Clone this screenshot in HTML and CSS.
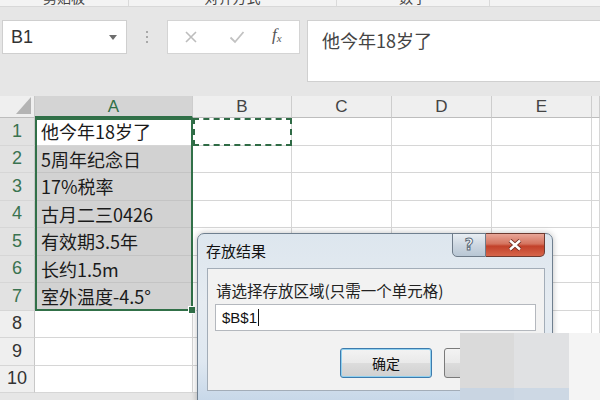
FILE: index.html
```html
<!DOCTYPE html>
<html lang="zh-CN">
<head>
    <meta charset="UTF-8">
    <title>存放结果</title>
    <link rel="stylesheet" href="styles.css">
</head>
<body>
    <div class="ribbon-tail">
        <div class="group g1"><span>剪贴板</span></div>
        <div class="group g2"><span>对齐方式</span></div>
        <div class="group g3"><span>数字</span></div>
        <div class="group g4"></div>
    </div>

    <div class="formula-row">
        <div class="name-box">
            <span>B1</span>
            <svg class="drop" width="8" height="5" viewBox="0 0 8 5"><path d="M0 0h8L4 5z" fill="#6d6d6d"/></svg>
        </div>
        <div class="grip"><i></i><i></i><i></i></div>
        <div class="fn-box">
            <svg class="ico-x" width="14" height="14" viewBox="0 0 14 14"><path d="M2 2l10 10M12 2L2 12" stroke="#bdbdbd" stroke-width="1.6" fill="none"/></svg>
            <svg class="ico-ok" width="16" height="14" viewBox="0 0 16 14"><path d="M1.5 7.5l4.5 4.5L14.5 2" stroke="#c2c2c2" stroke-width="1.8" fill="none"/></svg>
            <span class="fx">f<sub>x</sub></span>
        </div>
        <div class="formula-input">他今年18岁了</div>
    </div>

    <div class="sheet">
        <div class="corner"><b></b></div>
        <div class="col-head active">A</div>
        <div class="col-head">B</div>
        <div class="col-head">C</div>
        <div class="col-head">D</div>
        <div class="col-head">E</div>
        <div class="col-head"></div>

        <div class="row-head sel">1</div><div class="cell first">他今年18岁了</div><div class="cell"></div><div class="cell"></div><div class="cell"></div><div class="cell"></div><div class="cell"></div>
        <div class="row-head sel">2</div><div class="cell sel">5周年纪念日</div><div class="cell"></div><div class="cell"></div><div class="cell"></div><div class="cell"></div><div class="cell"></div>
        <div class="row-head sel">3</div><div class="cell sel">17%税率</div><div class="cell"></div><div class="cell"></div><div class="cell"></div><div class="cell"></div><div class="cell"></div>
        <div class="row-head sel">4</div><div class="cell sel">古月二三0426</div><div class="cell"></div><div class="cell"></div><div class="cell"></div><div class="cell"></div><div class="cell"></div>
        <div class="row-head sel">5</div><div class="cell sel">有效期3.5年</div><div class="cell"></div><div class="cell"></div><div class="cell"></div><div class="cell"></div><div class="cell"></div>
        <div class="row-head sel">6</div><div class="cell sel">长约1.5m</div><div class="cell"></div><div class="cell"></div><div class="cell"></div><div class="cell"></div><div class="cell"></div>
        <div class="row-head sel">7</div><div class="cell sel">室外温度-4.5°</div><div class="cell"></div><div class="cell"></div><div class="cell"></div><div class="cell"></div><div class="cell"></div>
        <div class="row-head">8</div><div class="cell"></div><div class="cell"></div><div class="cell"></div><div class="cell"></div><div class="cell"></div><div class="cell"></div>
        <div class="row-head">9</div><div class="cell"></div><div class="cell"></div><div class="cell"></div><div class="cell"></div><div class="cell"></div><div class="cell"></div>
        <div class="row-head">10</div><div class="cell"></div><div class="cell"></div><div class="cell"></div><div class="cell"></div><div class="cell"></div><div class="cell"></div>

        <div class="selection"><span class="handle"></span></div>
        <div class="marquee"></div>
    </div>

    <div class="dialog">
        <div class="dialog-title">
            <span>存放结果</span>
            <div class="caption-btns">
                <div class="btn-help">?</div>
                <div class="btn-close">
                    <svg width="16" height="12" viewBox="0 0 16 12"><path d="M3 1.5l10 9M13 1.5l-10 9" stroke="#6b2a20" stroke-width="4.2" fill="none"/><path d="M3 1.5l10 9M13 1.5l-10 9" stroke="#fff" stroke-width="2.4" fill="none"/></svg>
                </div>
            </div>
        </div>
        <div class="dialog-body">
            <div class="prompt">请选择存放区域(只需一个单元格)</div>
            <div class="ref-input">$B$1<span class="caret"></span></div>
            <div class="dialog-btns">
                <button class="btn default">确定</button>
                <button class="btn">取消</button>
            </div>
        </div>
    </div>

    <div class="mosaic">
        <i class="m1"></i><i class="m2"></i><i class="m3"></i>
        <i class="m4"></i><i class="m5"></i><i class="m6"></i>
    </div>
</body>
</html>
```

FILE: styles.css
```css
html, body {
    margin: 0;
    height: 400px;
    overflow: hidden;
}

body {
    position: relative;
    background: #e6e6e6;
    font-family: "Liberation Sans", "Noto Sans CJK SC", sans-serif;
    color: #222;
}

/* ribbon, only the bottom edge is visible */
.ribbon-tail {
    display: flex;
    height: 6px;
    overflow: hidden;
    background: #f3f3f3;
    border-bottom: 1px solid #d8d8d8;
}

.group {
    position: relative;
    text-align: center;
    border-right: 1px solid #dadada;
}

.group span {
    display: block;
    margin-top: -11px;
    font-family: "Noto Sans CJK SC", sans-serif;
    font-size: 14px;
    line-height: 16px;
    color: #444;
}

.g1 { width: 128px; }
.g2 { width: 207px; }
.g3 { width: 152px; }
.g4 { flex: 1; border-right: none; }

/* formula bar */
.formula-row {
    display: flex;
    align-items: flex-start;
    height: 89px;
    padding-top: 13px;
    box-sizing: border-box;
}

.name-box {
    display: flex;
    align-items: center;
    justify-content: space-between;
    box-sizing: border-box;
    width: 125px;
    height: 34px;
    margin-left: 2px;
    padding: 0 9px 0 8px;
    background: #fff;
    border: 1px solid #cfcfcf;
    font-size: 18px;
    color: #333;
}

.grip {
    display: flex;
    flex-direction: column;
    align-items: center;
    gap: 3px;
    width: 40px;
    padding-top: 11px;
}

.grip i {
    width: 2px;
    height: 2px;
    background: #a8a8a8;
}

.fn-box {
    position: relative;
    box-sizing: border-box;
    width: 133px;
    height: 34px;
    background: #fff;
    border: 1px solid #d4d4d4;
}

.ico-x {
    position: absolute;
    left: 16px;
    top: 9px;
}

.ico-ok {
    position: absolute;
    left: 61px;
    top: 9px;
}

.fx {
    position: absolute;
    left: 104px;
    top: 4px;
    font-family: "Liberation Serif", serif;
    font-style: italic;
    font-size: 17px;
    color: #555;
}

.fx sub {
    font-size: 11px;
    vertical-align: -2px;
}

.formula-input {
    box-sizing: border-box;
    flex: 1;
    height: 62px;
    margin-left: 7px;
    padding: 7px 0 0 14px;
    background: #fff;
    border: 1px solid #d0d0d0;
    border-right: none;
    font-family: "Noto Sans CJK SC", sans-serif;
    font-size: 18px;
    line-height: 24px;
    color: #444;
}

/* grid */
.sheet {
    position: relative;
    display: grid;
    grid-template-columns: 35px 158px 99px 100px 100px 100px 1fr;
    grid-template-rows: 22px repeat(10, 27.5px);
    background: #fff;
}

.corner,
.col-head,
.row-head,
.cell {
    box-sizing: border-box;
    border-right: 1px solid #d6d6d6;
    border-bottom: 1px solid #d6d6d6;
}

.corner {
    position: relative;
    background: #efefef;
    border-bottom-color: #bdbdbd;
    border-right-color: #c8c8c8;
}

.corner b {
    position: absolute;
    right: 3px;
    bottom: 3px;
    width: 0;
    height: 0;
    border-left: 15px solid transparent;
    border-bottom: 17px solid #b4b4b4;
}

.col-head {
    display: flex;
    align-items: center;
    justify-content: center;
    background: #efefef;
    border-right-color: #cdcdcd;
    border-bottom-color: #bdbdbd;
    font-size: 17px;
    color: #444;
}

.col-head.active {
    background: #d4d4d4;
    color: #2f6f47;
    border-bottom: 2px solid #2f6f47;
    padding-top: 2px;
}

.row-head {
    display: flex;
    align-items: center;
    justify-content: center;
    background: #efefef;
    border-right-color: #c8c8c8;
    font-size: 18px;
    color: #333;
}

.row-head.sel {
    background: #e2e2e2;
    color: #3a7350;
}

.cell {
    display: flex;
    align-items: center;
    padding-left: 6px;
    white-space: nowrap;
    font-family: "Noto Sans CJK SC", sans-serif;
    font-size: 18px;
    color: #1a1a1a;
}

.cell.sel {
    background: #d2d2d2;
    border-bottom-color: #c4c4c4;
    border-right-color: #c4c4c4;
}

.selection {
    position: absolute;
    left: 35px;
    top: 22px;
    width: 158px;
    height: 193px;
    box-sizing: border-box;
    border: 2px solid #317048;
}

.handle {
    position: absolute;
    right: -5px;
    bottom: -5px;
    width: 6px;
    height: 6px;
    background: #317048;
    border: 1px solid #fff;
}

.marquee {
    position: absolute;
    left: 193px;
    top: 22px;
    width: 99px;
    height: 28px;
    box-sizing: border-box;
    border: 2px dashed #2f6b45;
}

/* dialog */
.dialog {
    position: absolute;
    left: 197px;
    top: 233px;
    width: 356px;
    height: 172px;
    box-sizing: border-box;
    border: 1px solid #6f7f8f;
    border-radius: 7px 7px 0 0;
    background: linear-gradient(180deg, #dde6ee 0%, #e5ebf1 40%, #dfe8f1 75%, #c5d6e8 100%);
    box-shadow: 0 0 6px rgba(0, 0, 0, 0.25);
}

.dialog-title {
    display: flex;
    justify-content: space-between;
    height: 34px;
}

.dialog-title span {
    padding: 6px 0 0 8px;
    font-family: "Noto Sans CJK SC", sans-serif;
    font-size: 15px;
    color: #111;
}

.caption-btns {
    display: flex;
    height: 24px;
    margin: -1px 7px 0 0;
}

.btn-help {
    box-sizing: border-box;
    width: 34px;
    display: flex;
    align-items: center;
    justify-content: center;
    border: 1px solid #6e7b89;
    border-radius: 0 0 0 5px;
    background: linear-gradient(180deg, #e9eef3 0%, #cdd7e1 50%, #b8c6d4 100%);
    font-family: "DejaVu Sans", sans-serif;
    font-size: 15px;
    font-weight: bold;
    color: #fff;
    -webkit-text-stroke: 1px #5c6b7a;
}

.btn-close {
    box-sizing: border-box;
    width: 59px;
    display: flex;
    align-items: center;
    justify-content: center;
    border: 1px solid #6e3a30;
    border-left: none;
    border-radius: 0 0 5px 0;
    background: linear-gradient(180deg, #e8a698 0%, #d4735e 45%, #c2412a 55%, #d6654a 100%);
}

.dialog-body {
    box-sizing: border-box;
    height: 123px;
    margin: 0 7px 0 9px;
    padding: 11px 8px 0 7px;
    background: #f2f2f2;
    border: 1px solid #a3adb8;
}

.prompt {
    padding-left: 1px;
    font-family: "Noto Sans CJK SC", sans-serif;
    font-size: 15.5px;
    line-height: 20px;
    color: #222;
}

.ref-input {
    display: flex;
    align-items: center;
    box-sizing: border-box;
    height: 27px;
    margin-top: 4px;
    padding-left: 6px;
    background: #fff;
    border: 1px solid #b4b8be;
    font-size: 15px;
    color: #111;
}

.caret {
    width: 1px;
    height: 17px;
    margin-left: 1px;
    background: #111;
}

.dialog-btns {
    display: flex;
    justify-content: flex-end;
    gap: 12px;
    margin-top: 17px;
}

.btn {
    width: 92px;
    height: 30px;
    border: 1px solid #7a7a7a;
    border-radius: 3px;
    background: linear-gradient(180deg, #f3f3f3 0%, #e9e9e9 50%, #dcdcdc 51%, #d0d0d0 100%);
    font-family: "Noto Sans CJK SC", sans-serif;
    font-size: 14px;
    color: #111;
}

.btn.default {
    border-color: #3d7bad;
    box-shadow: inset 0 0 0 1px #8fd0ef;
}

/* blurred patch over the corner */
.mosaic {
    position: absolute;
    left: 460px;
    top: 333px;
    display: grid;
    grid-template-columns: 54px 55px 31px;
    grid-template-rows: 55px 12px;
}

.m1 { background: #dadada; }
.m2 { background: #e0e1e3; }
.m3 { background: #f4f4f4; }
.m4 { background: #c9d5e2; }
.m5 { background: #cdd8e4; }
.m6 { background: #f4f4f4; }
```
